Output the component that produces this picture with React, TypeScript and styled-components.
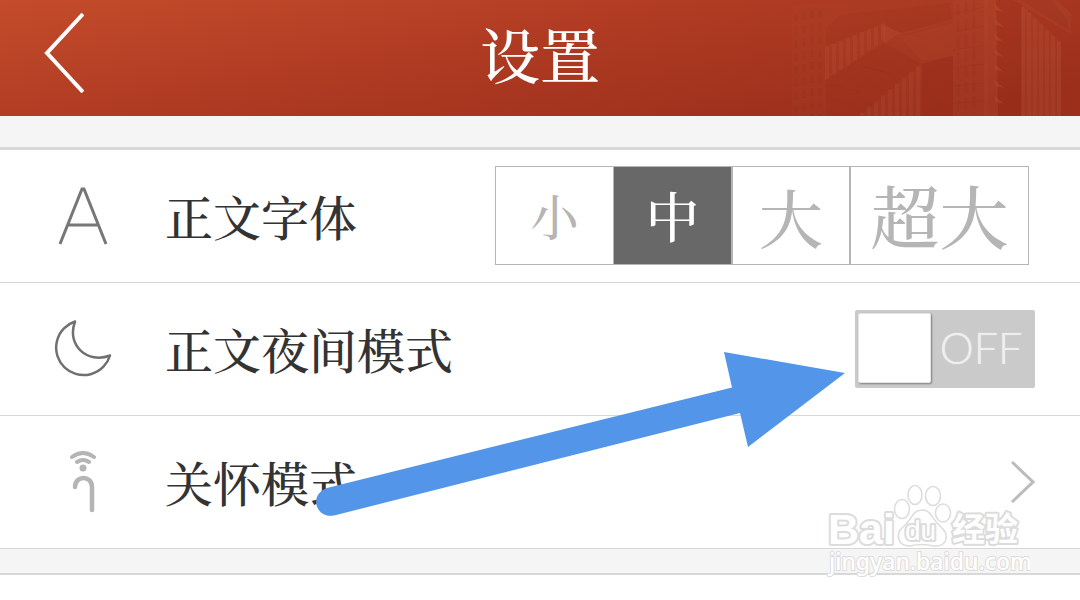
import React, { useState } from "react";
import styled, { createGlobalStyle } from "styled-components";

const serif = `"Noto Serif CJK SC", "Source Han Serif SC", "Noto Sans CJK SC", serif`;

const GlobalStyle = createGlobalStyle`
  * { box-sizing: border-box; }
  body { margin: 0; background: #fff; color: #333; font-family: ${serif}; font-weight: 500; }
`;

const Page = styled.div`
  position: relative;
  min-height: 100vh;
  overflow: hidden;
  background: #fff;
`;

const Header = styled.header`
  position: relative;
  display: grid;
  grid-template-columns: 130px 1fr 130px;
  align-items: center;
  height: 116px;
  background: linear-gradient(170deg, #c44c2b 0%, #ae3a22 46%, #9b2f1b 90%);
`;

const Skyline = styled.svg`
  position: absolute;
  top: 0;
  right: 0;
`;

const BackButton = styled.button`
  position: relative;
  display: flex;
  padding: 0 0 10px 44px;
  border: 0;
  background: none;
  cursor: pointer;
`;

const Title = styled.h1`
  position: relative;
  margin: 0;
  padding-bottom: 10px;
  color: #fff;
  font-size: 60px;
  font-weight: 500;
  line-height: 106px;
  text-align: center;
`;

const Band = styled.div<{ $height: number; $edge: number }>`
  height: ${(p) => p.$height}px;
  background: #f5f5f5;
  border-bottom: ${(p) => p.$edge}px solid #d8d8d8;
`;

const Row = styled.section`
  display: flex;
  align-items: center;
  height: 133px;
  padding: 0 45px 0 54px;
  border-bottom: 1px solid #d8d8d8;
`;

const IconCell = styled.span`
  display: flex;
  justify-content: center;
  width: 58px;
  margin-right: 53px;
`;

const RowTitle = styled.h2`
  flex: 1;
  margin: 0;
  font-size: 48px;
  font-weight: 500;
  line-height: 72px;
`;

const Sizes = styled.div`
  display: grid;
  grid-template-columns: 117px 118px 118px 179px;
  height: 99px;
  margin: 0 6px 2px 0;
  border: 1px solid #b5b5b5;
`;

const SizeOption = styled.label<{ $size: number; $on: boolean; $edge: number }>`
  position: relative;
  display: flex;
  align-items: center;
  justify-content: center;
  border-left: ${(p) => p.$edge}px solid #b5b5b5;
  background: ${(p) => (p.$on ? "#686868" : "#fff")};
  color: ${(p) => (p.$on ? "#fff" : "#b5b5b5")};
  font-size: ${(p) => p.$size}px;
  font-weight: 500;
  line-height: 96px;
  cursor: pointer;
`;

const HiddenInput = styled.input`
  position: absolute;
  inset: 0;
  width: 100%;
  height: 100%;
  margin: 0;
  appearance: none;
  cursor: pointer;
`;

const Switch = styled.label<{ $on: boolean }>`
  position: relative;
  display: flex;
  flex-direction: ${(p) => (p.$on ? "row-reverse" : "row")};
  align-items: center;
  width: 180px;
  height: 78px;
  padding: 2px 4px 4px 3px;
  border-radius: 2px;
  background: ${(p) => (p.$on ? "#b33d23" : "#cacaca")};
`;

const Knob = styled.span`
  width: 73px;
  height: 70px;
  border: 1px solid #e4e4e4;
  border-radius: 2px;
  background: #fff;
  box-shadow: 1px 1px 2px #808080;
`;

const SwitchText = styled.span`
  flex: 1;
  color: #efefef;
  font-family: Lato, sans-serif;
  font-size: 43px;
  font-weight: 300;
  line-height: 72px;
  text-align: center;
  text-shadow: 0 0 1px #efefef;
`;

const MoreButton = styled.button`
  display: flex;
  padding: 0;
  border: 0;
  background: none;
  cursor: pointer;
`;

const Arrow = styled.svg`
  position: absolute;
  top: 350px;
  right: 234px;
  pointer-events: none;
`;

const Watermark = styled.svg`
  position: absolute;
  top: 480px;
  right: 50px;
  pointer-events: none;
`;

const sizes = [
  { name: "小", size: 48, edge: 0 },
  { name: "中", size: 54, edge: 1 },
  { name: "大", size: 64, edge: 2 },
  { name: "超大", size: 69, edge: 2 },
];

function Stripes({ from, to, step, top, slope, bottom, endSlope }: {
  from: number; to: number; step: number; top: number; slope: number; bottom: number; endSlope: number;
}) {
  const bars = [];
  for (let x = from; x < to; x += step) {
    const d = x - from;
    bars.push(<path key={x} d={`M${x} ${top + d * slope}V${bottom + d * endSlope}`} />);
  }
  return <g stroke="#c4664a" strokeWidth="4" opacity=".2">{bars}</g>;
}

function Buildings() {
  return (
    <Skyline width="300" height="116" viewBox="0 0 300 116" aria-hidden="true">
      <g opacity=".75">
        <path d="M12 5 90 0H208V116H12Z" fill="#c87458" opacity=".07" />
        <path d="M46 80 104 43 142 64 80 116H46Z" fill="#902a19" opacity=".22" />
        <path d="M60 15 170 3 172 19 121 33 102 24 46 46V28Z" fill="#8f2b19" opacity=".16" />
        <path d="M142 64 173 56V116H142Z" fill="#952a19" opacity=".5" />
        <path d="M118 34 173 21V56L142 61Z" fill="#c96c50" opacity=".1" />
        <path d="M173 0H204V116H173Z" fill="#d88464" opacity=".08" />
        <path d="M204 0H216L218 116H204Z" fill="#e18d70" opacity=".13" />
        <path d="M218 0H242V116H218Z" fill="#7c2317" opacity=".08" />
        <path d="M242 5 281 43V116H242Z" fill="#d17c60" opacity=".1" />
        <path d="M233 0H276L291 13V34Z" fill="#c97b63" opacity=".14" />
        <path d="M241 0H272L288 20V30Z" fill="#922b1a" opacity=".3" />
        <Stripes from={47} to={105} step={7} top={47} slope={-0.42} bottom={79} endSlope={-0.68} />
        <path d="M102 24 121 33 104 43Z" fill="#c4664a" opacity=".2" />
        <Stripes from={82} to={142} step={7} top={113} slope={-0.84} bottom={116} endSlope={0} />
        <Stripes from={243} to={282} step={6} top={7} slope={0.95} bottom={116} endSlope={0} />
        <g stroke="#822417" strokeWidth="3" strokeDasharray="8 5" opacity=".13">
          <path d="M16 14V116M24 12V116M32 10V116M40 10V116" />
          <path d="M178 4V116M186 2V116M194 0V116" strokeDasharray="12 4" />
        </g>
        <g stroke="#8b2919" opacity=".25">
          <path d="M121 36 173 22M46 84 80 92M46 98 74 107M82 66 112 74M173 14 204 7M173 32 204 26M173 50 204 45M173 68 204 64M173 86 204 83M173 103 204 101" />
        </g>
        <g fill="#d47e61" opacity=".22">
          {[4, 19, 34, 49, 64, 80, 96].map((y) => (
            <path key={y} d={`M214 ${y} 224 ${y + 8} 216 ${y + 6}Z`} />
          ))}
        </g>
      </g>
    </Skyline>
  );
}

export default function App() {
  const [size, setSize] = useState("中");
  const [night, setNight] = useState(false);
  return (
    <Page>
      <GlobalStyle />
      <Header>
        <Buildings />
        <BackButton aria-label="返回">
          <svg width="40" height="80" viewBox="0 0 40 80">
            <path d="M39 1 3 40 39 79" fill="none" stroke="#fff" strokeWidth="4" />
          </svg>
        </BackButton>
        <Title>设置</Title>
      </Header>
      <main>
        <Band $height={34} $edge={3} />
        <Row>
          <IconCell>
            <svg width="50" height="58" viewBox="0 0 50 58" fill="none" stroke="#777" strokeWidth="3">
              <path d="M2 57 24 2H26L48 57M10 38H40" />
            </svg>
          </IconCell>
          <RowTitle>正文字体</RowTitle>
          <Sizes role="radiogroup" aria-label="正文字体">
            {sizes.map((s) => (
              <SizeOption key={s.name} $size={s.size} $edge={s.edge} $on={size === s.name}>
                <HiddenInput type="radio" name="size" checked={size === s.name} onChange={() => setSize(s.name)} />
                {s.name}
              </SizeOption>
            ))}
          </Sizes>
        </Row>
        <Row>
          <IconCell>
            <svg width="58" height="58" viewBox="0 0 58 58" fill="none" stroke="#707070" strokeWidth="2.5" strokeLinejoin="round">
              <path d="M21 1.500A27.500 27.500 0 1 0 56 35.500C34 44 12 26 21 1.500Z" />
            </svg>
          </IconCell>
          <RowTitle>正文夜间模式</RowTitle>
          <Switch $on={night}>
            <HiddenInput type="checkbox" aria-label="正文夜间模式" checked={night} onChange={() => setNight(!night)} />
            <Knob />
            <SwitchText>{night ? "ON" : "OFF"}</SwitchText>
          </Switch>
        </Row>
        <Row>
          <IconCell>
            <svg width="30" height="64" viewBox="0 0 30 64" fill="none" stroke="#b5b5b5" strokeWidth="4" strokeLinecap="round">
              <path d="M4 7Q15 -1 26 7M9 12Q15 8 21 12" />
              <circle cx="15" cy="18" r="3.5" fill="#b5b5b5" stroke="none" />
              <path d="M7 37C7 25 24 25 24 37V60" strokeWidth="4.5" />
            </svg>
          </IconCell>
          <RowTitle>关怀模式</RowTitle>
          <MoreButton aria-label="关怀模式">
            <svg width="24" height="42" viewBox="0 0 24 42">
              <path d="M1 1 22 21 1 41" fill="none" stroke="#bcbcbc" strokeWidth="3" />
            </svg>
          </MoreButton>
        </Row>
        <Band $height={26} $edge={2} />
      </main>
      <Arrow width="532" height="168" viewBox="0 0 532 168" aria-hidden="true">
        <path d="M13 138 418 37.500 410 2 531 23 434 97 426 63 20 165.500C2 169-6 145 13 138Z" fill="#5295e9" />
      </Arrow>
      <Watermark width="210" height="100" viewBox="0 0 210 100" role="img" aria-label="Baidu 经验">
        <g fill="#fff" stroke="#dcdcdc" strokeWidth="4" paintOrder="stroke" strokeLinejoin="round" fontFamily='"Liberation Sans", sans-serif'>
          <text x="8" y="64" fontSize="43" fontWeight="700">Bai</text>
          <g strokeWidth="1.5" paintOrder="normal">
            <ellipse cx="82" cy="29" rx="7.5" ry="9.5" />
            <ellipse cx="95" cy="15" rx="7" ry="9.5" />
            <ellipse cx="113" cy="16" rx="7.5" ry="9.5" />
            <ellipse cx="123" cy="33" rx="7.5" ry="9" />
            <path d="M102 30C92 30 92 40 84 46C74 54 78 66 90 66Q102 63 114 66C127 67 130 55 121 47C111 39 112 30 102 30Z" />
          </g>
          <text x="85" y="60" fontSize="28">du</text>
          <text x="132" y="61" fontSize="33" fontWeight="700" fontFamily='"Noto Sans CJK SC", sans-serif'>经验</text>
          <text x="9" y="90" fontSize="23" strokeWidth="2" fontWeight="500" fontFamily='"Noto Sans", sans-serif'>jingyan.baidu.com</text>
        </g>
      </Watermark>
    </Page>
  );
}
